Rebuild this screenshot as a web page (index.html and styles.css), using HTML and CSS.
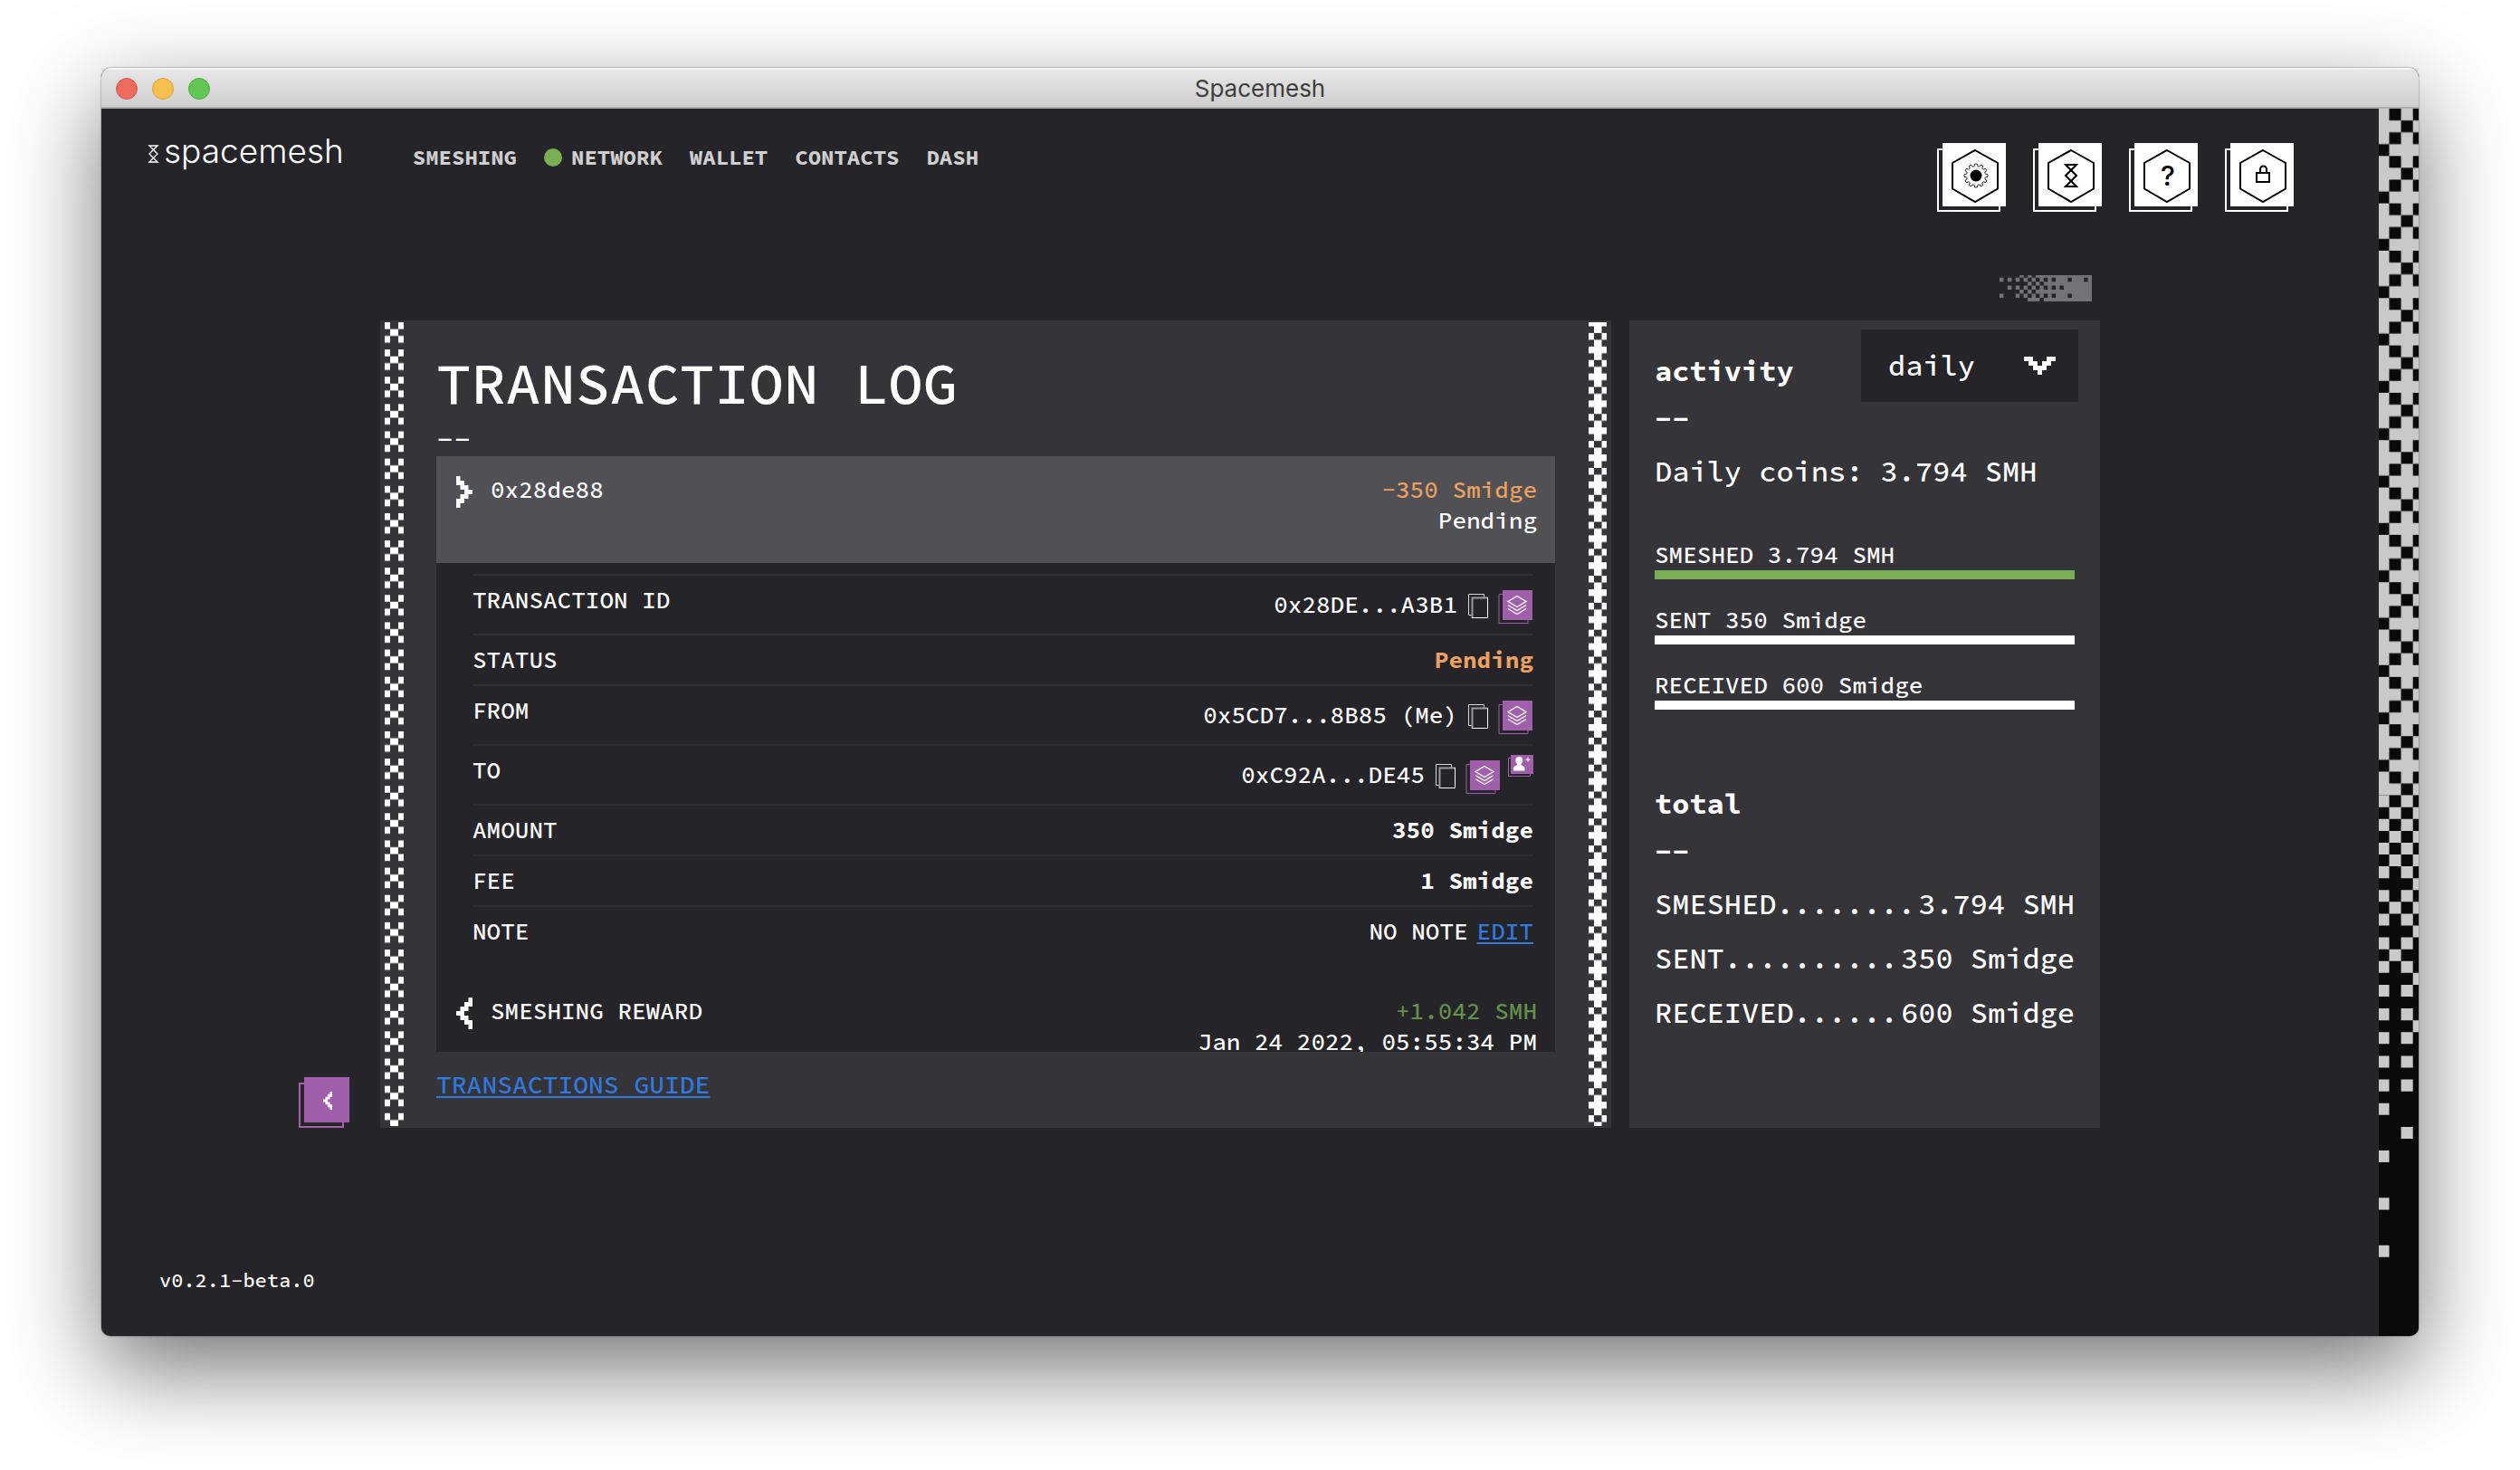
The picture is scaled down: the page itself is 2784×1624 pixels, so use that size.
FILE: index.html
```
<!DOCTYPE html>
<html lang="en">
<head>
<meta charset="utf-8">
<title>Spacemesh</title>
<link rel="stylesheet" href="styles.css">
</head>
<body>
<svg class="defs" aria-hidden="true">
  <symbol id="px-right" viewBox="0 0 4 7" preserveAspectRatio="none"><path d="M0 0h1v1h1v1h1v1h1v1h-1v1h-1v1h-1v1h-1v-2h1v-1h1v-1h-1v-1h-1z"/></symbol>
  <symbol id="px-left" viewBox="0 0 4 7" preserveAspectRatio="none"><path d="M4 0h-1v1h-1v1h-1v1h-1v1h1v1h1v1h1v1h1v-2h-1v-1h-1v-1h1v-1h1z"/></symbol>
  <symbol id="copy" viewBox="0 0 29 44">
    <path d="M8 33.5H4.500V10.500H21.500V14" fill="none" stroke="#d8d8d8"/>
    <path d="M8.500 37V14.500H26" fill="none" stroke="#9a999c" stroke-width="2"/>
    <path d="M8 36.500H25.500V14" fill="none" stroke="#fff"/>
  </symbol>
  <symbol id="layers" viewBox="0 0 39 44">
    <path d="M1 10.500H33V42.500H1z" fill="none" stroke="#a05fab"/>
    <path d="M5 6H38V39H5z" fill="#a05fab"/>
    <path d="M21 12.500l10 6-10 6-10-6zM11 22.500l10 6 10-6M11 26.500l10 6 10-6" fill="none" stroke="#fff" stroke-width="1.400"/>
  </symbol>
</svg>
<div class="window">
  <div class="titlebar">
    <span class="lights"><i class="light red"></i><i class="light yellow"></i><i class="light green"></i></span>
    <span class="window-title">Spacemesh</span>
  </div>
  <div class="app">
    <div class="main">
      <header class="header">
        <a class="logo" href="#"><svg width="13" height="24" viewBox="0 0 13 24" fill="none" stroke="#fff" stroke-width="1.400"><path d="M2 3H11L6.500 7.500L2 12L6.500 16.500L2 21H11L6.500 16.500L11 12L6.500 7.500z"/></svg><span>spacemesh</span></a>
        <nav class="nav">
          <a href="#">SMESHING</a>
          <a href="#"><i class="status-dot"></i>NETWORK</a>
          <a href="#">WALLET</a>
          <a href="#">CONTACTS</a>
          <a href="#">DASH</a>
        </nav>
        <div class="tools">
          <button class="tool" type="button" aria-label="Settings"><svg width="76" height="76" viewBox="0 0 76 76" fill="none" stroke="#000"><path d="M42 8L67 22V50.500L42 65L17 50.500V22z" stroke-width="2"/>
            <g transform="translate(43 36)" stroke-width=".8"><circle r="6.500" fill="#000" stroke="none"/><path id="tooth" d="M-2.670 -9.950L-1.800 -10.400L-1.300 -13H1.300L1.800 -10.400L2.670 -9.950"/><use href="#tooth" transform="rotate(30)"/><use href="#tooth" transform="rotate(60)"/><use href="#tooth" transform="rotate(90)"/><use href="#tooth" transform="rotate(120)"/><use href="#tooth" transform="rotate(150)"/><use href="#tooth" transform="rotate(180)"/><use href="#tooth" transform="rotate(210)"/><use href="#tooth" transform="rotate(240)"/><use href="#tooth" transform="rotate(270)"/><use href="#tooth" transform="rotate(300)"/><use href="#tooth" transform="rotate(330)"/></g></svg></button>
          <button class="tool" type="button" aria-label="Network status"><svg width="76" height="76" viewBox="0 0 76 76" fill="none" stroke="#000" stroke-width="2"><path d="M42 8L67 22V50.500L42 65L17 50.500V22zM36 24H48L42 30L36 36L42 42L36 48H48L42 42L48 36L42 30z"/></svg></button>
          <button class="tool" type="button" aria-label="Help"><svg width="76" height="76" viewBox="0 0 76 76"><path d="M42 8L67 22V50.500L42 65L17 50.500V22z" fill="none" stroke="#000" stroke-width="2"/><text class="help-mark" x="43" y="47" text-anchor="middle">?</text></svg></button>
          <button class="tool" type="button" aria-label="Lock"><svg width="76" height="76" viewBox="0 0 76 76" fill="none" stroke="#000" stroke-width="2"><path d="M42 8L67 22V50.500L42 65L17 50.500V22zM35 33H49V43H35zM39 33V29a3.500 3.500 0 0 1 7 0V33"/></svg></button>
        </div>
      </header>

      <div class="board">
        <svg class="comet" width="102" height="29" viewBox="0 0 23 6.500" preserveAspectRatio="none" fill="#737274"><path d="M5 0h1v.6h-1zM7 0h1v.6h-1zM9 0h14v.6h-14zM0 .6h1v1h-1zM2 .6h1v1h-1zM4 .6h1v1h-1zM6 .6h1v1h-1zM8 .6h1v1h-1zM10 .6h1v1h-1zM12 .6h1v1h-1zM14 .6h3v1h-3zM18 .6h3v1h-3zM22 .6h1v1h-1zM7 1.600h1v1h-1zM9 1.600h1v1h-1zM11 1.600h12v1h-12zM2 2.600h1v1h-1zM4 2.600h1v1h-1zM6 2.600h1v1h-1zM8 2.600h1v1h-1zM10 2.600h1v1h-1zM12 2.600h1v1h-1zM14 2.600h1v1h-1zM16 2.600h7v1h-7zM5 3.600h1v1h-1zM7 3.600h1v1h-1zM9 3.600h14v1h-14zM0 4.600h1v1h-1zM4 4.600h1v1h-1zM6 4.600h1v1h-1zM8 4.600h1v1h-1zM10 4.600h1v1h-1zM12 4.600h1v1h-1zM14 4.600h3v1h-3zM18 4.600h5v1h-5zM7 5.600h3v.9h-3zM11 5.600h12v.9h-12z"/></svg>

        <button class="back" type="button" aria-label="Back"><svg width="10" height="20"><use href="#px-left" width="10" height="20"/></svg></button>

        <section class="log">
          <svg class="trim" width="21" aria-hidden="true"><defs><pattern id="crosses" width="21" height="30.130" patternUnits="userSpaceOnUse"><path fill="#fff" d="M0 0h6v7.500h-6zM15 0h6v7.500h-6zM6 7.500h9v7.500h-9zM0 15h6v7.500h-6zM15 15h6v7.500h-6z"/></pattern></defs><rect width="21" height="100%" fill="url(#crosses)"/></svg>
          <div class="log-body">
            <h1>TRANSACTION LOG</h1>
            <div class="rule">--</div>
            <div class="list">
              <article>
                <div class="entry selected">
                  <svg class="entry-icon" width="18" height="35" aria-hidden="true"><use href="#px-right" width="18" height="35"/></svg>
                  <span class="entry-name">0x28de88</span>
                  <div class="entry-sum"><span class="spent">-350 Smidge</span><span>Pending</span></div>
                </div>
                <dl class="details">
                  <div class="row"><dt>TRANSACTION ID</dt><dd class="tall"><span>0x28DE...A3B1</span><button type="button" aria-label="Copy"><svg width="29" height="44"><use href="#copy"/></svg></button><button type="button" aria-label="Open in explorer"><svg width="39" height="44"><use href="#layers"/></svg></button></dd></div>
                  <div class="row"><dt>STATUS</dt><dd class="spent strong">Pending</dd></div>
                  <div class="row"><dt>FROM</dt><dd class="tall"><span>0x5CD7...8B85 (Me)</span><button type="button" aria-label="Copy"><svg width="29" height="44"><use href="#copy"/></svg></button><button type="button" aria-label="Open in explorer"><svg width="39" height="44"><use href="#layers"/></svg></button></dd></div>
                  <div class="row"><dt>TO</dt><dd class="tall"><span>0xC92A...DE45</span><button type="button" aria-label="Copy"><svg width="29" height="44"><use href="#copy"/></svg></button><button type="button" aria-label="Open in explorer"><svg width="39" height="44"><use href="#layers"/></svg></button><button class="add-contact" type="button" aria-label="Add contact"><svg width="28" height="24" viewBox="0 0 28 24"><path d="M.5 3.500H24.500V23.500H.5z" fill="none" stroke="#a05fab"/><path d="M3 0H28V21H3z" fill="#a05fab"/><path d="M6 17.500V15q0-2.500 3-3.200Q10.500 11 10 10Q8 8 8.300 6A4 4 0 0 1 16.300 6Q16.500 8 14.500 10Q14 11 15.500 11.800Q18.500 12.500 18.500 15V17.500zM19.500 4.800h2v-2h1v2h2v1h-2v2h-1v-2h-2z" fill="#fff"/></svg></button></dd></div>
                  <div class="row"><dt>AMOUNT</dt><dd class="strong">350 Smidge</dd></div>
                  <div class="row"><dt>FEE</dt><dd class="strong">1 Smidge</dd></div>
                  <div class="row"><dt>NOTE</dt><dd class="note"><span>NO NOTE</span><a class="link" href="#">EDIT</a></dd></div>
                </dl>
              </article>
              <article>
                <div class="entry">
                  <svg class="entry-icon" width="18" height="35" aria-hidden="true"><use href="#px-left" width="18" height="35"/></svg>
                  <span class="entry-name">SMESHING REWARD</span>
                  <div class="entry-sum"><span class="earned">+1.042 SMH</span><span>Jan 24 2022, 05:55:34 PM</span></div>
                </div>
              </article>
            </div>
            <a class="link guide" href="#">TRANSACTIONS GUIDE</a>
          </div>
          <svg class="trim" width="20" aria-hidden="true"><defs><pattern id="plusses" y="-3" width="20" height="29.800" patternUnits="userSpaceOnUse"><path fill="#fff" d="M0 0h20v7.450h-20zM6 7.450h8.500v7.450h-8.500zM0 14.900h6v7.450h-6zM14.500 14.900h5.500v7.450h-5.500zM6 22.350h8.500v7.450h-8.500z"/></pattern></defs><rect width="20" height="100%" fill="url(#plusses)"/></svg>
        </section>

        <aside class="stats">
          <div class="stats-head">
            <div class="heading"><h2>activity</h2><div class="rule">--</div></div>
            <div class="period">
              <select aria-label="Period"><option>daily</option><option>monthly</option><option>yearly</option></select>
              <svg width="35" height="20" viewBox="0 0 7 4" fill="#fff" aria-hidden="true"><path d="M0 0h2v1h1v1h1v-1h1v-1h2v1h-1v1h-1v1h-1v1h-1v-1h-1v-1h-1v-1h-1z"/></svg>
            </div>
          </div>
          <p class="coins">Daily coins: 3.794 SMH</p>
          <div class="bars">
            <div><span>SMESHED 3.794 SMH</span><div class="bar full"></div></div>
            <div><span>SENT 350 Smidge</span><div class="bar"></div></div>
            <div><span>RECEIVED 600 Smidge</span><div class="bar"></div></div>
          </div>
          <div class="heading"><h2>total</h2><div class="rule">--</div></div>
          <div class="totals">
            <p><span>SMESHED........</span><span>3.794 SMH</span></p>
            <p><span>SENT..........</span><span>350 Smidge</span></p>
            <p><span>RECEIVED......</span><span>600 Smidge</span></p>
          </div>
        </aside>
      </div>
      <footer class="version">v0.2.1-beta.0</footer>
    </div>
    <svg class="edge" width="44" viewBox="0.120 0 3.364 103.670" preserveAspectRatio="xMinYMin slice" aria-hidden="true">
      <defs><pattern id="weave" width="4" height="4" patternUnits="userSpaceOnUse"><path fill="#0a0a0a" d="M1 0h1v1h-1zM3 0h1v1h-1zM2 1h1v1h-1zM1 2h1v1h-1zM3 2h1v1h-1zM0 3h1v1h-1z"/></pattern></defs>
      <rect width="4" height="58" fill="#c9c9c9"/>
      <rect width="4" height="58" fill="url(#weave)"/>
      <path fill="#c9c9c9" d="M0 58h1v1h-1zM2 58h1v1h-1zM1 59h1v1h-1zM3 59h1v1h-1zM0 60h1v1h-1zM2 60h1v1h-1zM1 61h1v1h-1zM3 61h1v1h-1zM0 62h1v1h-1zM2 62h1v1h-1zM1 63h1v1h-1zM3 63h1v1h-1zM0 64h1v1h-1zM2 64h1v1h-1zM3 65h1v1h-1zM0 66h1v1h-1zM2 66h1v1h-1zM1 67h1v1h-1zM3 67h1v1h-1zM0 68h1v1h-1zM2 68h1v1h-1zM3 69h1v1h-1zM0 70h1v1h-1zM2 70h1v1h-1zM1 71h1v1h-1zM0 72h1v1h-1zM2 72h1v1h-1zM3 73h1v1h-1zM0 74h1v1h-1zM2 74h1v1h-1zM0 76h1v1h-1zM2 76h1v1h-1zM3 77h1v1h-1zM0 78h1v1h-1zM2 78h1v1h-1zM0 80h1v1h-1zM2 80h1v1h-1zM0 82h1v1h-1zM2 82h1v1h-1zM0 84h1v1h-1zM2 86h1v1h-1zM0 88h1v1h-1zM0 92h1v1h-1zM0 96h1v1h-1z"/>
    </svg>
  </div>
</div>
</body>
</html>
```

FILE: styles.css
```
:root {
  --bg: #252429;
  --panel: #353438;
  --purple: #a05fab;
  --blue: #3179de;
  --mono: "Source Code Pro", "Liberation Mono", monospace;
}

* { box-sizing: border-box; }
h1, h2, p, dl, dd { margin: 0; }
button { padding: 0; border: 0; background: none; color: inherit; font: inherit; cursor: pointer; }
svg { display: block; flex: none; }
.defs { position: absolute; width: 0; height: 0; }

body {
  display: flex;
  min-height: 100vh;
  margin: 0;
  padding: 75px 112px 148px;
  background: #fff;
  color: #fff;
  font: 500 26px/34px var(--mono);
}

.window {
  display: flex;
  flex: 1;
  flex-direction: column;
  min-width: 0;
  border-radius: 10px;
  background: var(--bg);
  box-shadow: 0 0 2px rgba(0, 0, 0, .6), 0 36px 100px rgba(0, 0, 0, .55);
  overflow: hidden;
}

.titlebar {
  display: grid;
  grid-template-columns: 1fr auto 1fr;
  align-items: center;
  height: 45px;
  padding: 3px 16px 0;
  border-bottom: 2px solid #adadad;
  background: linear-gradient(#e8e8e8, #cecece);
  box-shadow: inset 0 2px #f4f4f4;
}
.lights { display: flex; gap: 16px; }
.light { width: 24px; height: 24px; border: 1px solid; border-radius: 50%; }
.red { border-color: #d8584d; background: #ed6a5e; }
.yellow { border-color: #dba43c; background: #f6bf4f; }
.green { border-color: #52a842; background: #62c655; }
.window-title { color: #3e3e3e; font: 26px/32px Inter, sans-serif; }

.app { display: flex; flex: 1; }
.main { display: flex; flex: 1; flex-direction: column; min-width: 0; }
.edge { align-self: stretch; width: 44px; height: auto; background: #0a0a0a; }

.header { display: flex; align-items: flex-start; padding: 38px 94px 0 51px; }
.logo { display: flex; gap: 5px; color: #fff; font: 300 37px/18px Inter, sans-serif; text-decoration: none; }
.nav { display: flex; gap: 30px; margin-left: 76px; font-size: 24px; font-weight: 700; line-height: 32px; }
.nav a { display: flex; align-items: center; gap: 10px; color: #cfcfd0; text-decoration: none; }
.status-dot { width: 20px; height: 20px; border-radius: 50%; background: #78ae54; }
.tools { display: flex; gap: 30px; margin-left: auto; }
.tool, .back { position: relative; background: linear-gradient(#fff, #fff) 6px 0 / 70px 70px no-repeat; }
.tool { width: 76px; height: 76px; }
.tool::before, .back::before {
  content: "";
  position: absolute;
  inset: 6px 6px 0 0;
  border: 2px solid #fff;
  clip-path: polygon(0 0, 6px 0, 6px calc(100% - 6px), 100% calc(100% - 6px), 100% 100%, 0 100%);
}
.tool svg { position: relative; }
.help-mark { font: 500 30px Inter, sans-serif; }

.board {
  display: grid;
  grid-template-columns: minmax(90px, 1fr) minmax(0, 1360px) minmax(0, 540px) minmax(0, 1fr);
  margin-top: 70px;
}
.comet { grid-column: 3; justify-self: end; margin: 0 9px 21px 0; }
.back {
  grid-area: 2 / 1;
  align-self: end;
  justify-self: end;
  display: grid;
  justify-content: start;
  width: 56px;
  height: 56px;
  margin-right: 34px;
  padding: 16px 0 0 27px;
  background: linear-gradient(var(--purple), var(--purple)) 6px 0 / 50px 50px no-repeat;
  fill: #fff;
}
.back::before { border-color: var(--purple); }

.log { grid-area: 2 / 2; display: flex; padding: 2px 5px; background: var(--panel); fill: #fff; }
.trim { height: auto; }
.log-body { flex: 1; min-width: 0; padding: 28px 37px 28px 36px; }
h1 { margin-bottom: 4px; font-size: 64px; font-weight: 500; line-height: 78px; }
.rule { font-size: 32px; line-height: 38px; }
.list { height: 658px; background: var(--bg); overflow: hidden; }
.entry { display: flex; align-items: flex-start; height: 118px; padding: 20px 20px 0 22px; }
.selected { background: #515054; }
.entry-icon { margin: 2px 20px 0 0; }
.entry-sum { display: flex; flex-direction: column; margin-left: auto; text-align: right; }
.spent { color: #eba160; }
.earned { color: #63924a; }
.details { padding: 12px 24px 24px 40px; }
.row { display: flex; justify-content: space-between; padding: 10px 0; border-top: 2px solid #2f2f30; }
.row dd { display: flex; gap: 8px; }
.row .note { gap: 10px; }
.row .tall { align-items: center; height: 44px; }
.strong { font-weight: 700; }
.row .add-contact { align-self: flex-start; }
.link { color: var(--blue); text-decoration: underline 2px; text-decoration-skip-ink: none; text-underline-offset: 3px; }
.guide { display: block; width: fit-content; margin-top: 18px; font-size: 28px; line-height: 36px; }

.stats { grid-area: 2 / 3; margin-left: 20px; padding: 10px 28px 0; background: var(--panel); }
.stats-head { display: flex; align-items: flex-start; justify-content: space-between; }
.stats-head .heading { padding-top: 26px; }
.heading { display: grid; gap: 14px; font-weight: 700; }
h2 { font-size: 32px; line-height: 40px; }
.period { display: grid; align-items: center; width: 240px; margin-right: -4px; }
.period > * { grid-area: 1 / 1; }
.period select {
  height: 80px;
  padding: 0 30px;
  border: 0;
  border-radius: 0;
  appearance: none;
  background: var(--bg);
  color: #fff;
  font: 500 32px/40px var(--mono);
}
.period svg { justify-self: end; margin-right: 25px; pointer-events: none; }
.coins { margin-top: 19px; font-size: 32px; line-height: 40px; }
.bars { display: grid; gap: 28px; margin: 55px 0 84px; }
.bars span { display: block; }
.bar { height: 10px; background: #fff; }
.full { background: #78ae54; }
.totals { display: grid; gap: 20px; margin-top: 19px; font-size: 32px; line-height: 40px; }
.totals p { display: flex; justify-content: space-between; }

.version { margin-top: auto; padding: 0 64px 48px; font-size: 22px; line-height: 28px; }
```
